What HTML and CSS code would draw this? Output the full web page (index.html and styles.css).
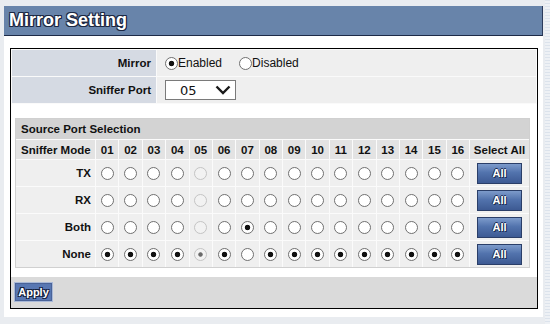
FILE: index.html
```html
<!DOCTYPE html>
<html>
<head>
<meta charset="utf-8">
<link rel="stylesheet" href="styles.css">
</head>
<body>
<div class="page">
  <div class="title">Mirror Setting</div>
  <div class="content">
    <div class="box">
      <div class="settings">
        <div class="lbl">Mirror</div>
        <div class="val">
          <label class="opt"><input type="radio" name="mirror" checked>Enabled</label>
          <label class="opt"><input type="radio" name="mirror">Disabled</label>
        </div>
        <div class="lbl">Sniffer Port</div>
        <div class="val">
          <span class="sel-wrap">
            <select class="sel"><option>05</option></select>
            <svg class="chev" width="16" height="10" viewBox="0 0 16 10"><path d="M1.5 1.5 L8 8 L14.5 1.5" fill="none" stroke="#1a1a1a" stroke-width="2.4"/></svg>
          </span>
        </div>
      </div>

      <div class="src">
        <div class="src-head">Source Port Selection</div>
        <div class="ch mode">Sniffer Mode</div>
        <div class="ch">01</div><div class="ch">02</div><div class="ch">03</div><div class="ch">04</div>
        <div class="ch">05</div><div class="ch">06</div><div class="ch">07</div><div class="ch">08</div>
        <div class="ch">09</div><div class="ch">10</div><div class="ch">11</div><div class="ch">12</div>
        <div class="ch">13</div><div class="ch">14</div><div class="ch">15</div><div class="ch">16</div>
        <div class="ch">Select All</div>

        <div class="rl">TX</div>
        <div class="rc"><input type="radio" name="p1"></div><div class="rc"><input type="radio" name="p2"></div>
        <div class="rc"><input type="radio" name="p3"></div><div class="rc"><input type="radio" name="p4"></div>
        <div class="rc"><input type="radio" name="p5" disabled></div><div class="rc"><input type="radio" name="p6"></div>
        <div class="rc"><input type="radio" name="p7"></div><div class="rc"><input type="radio" name="p8"></div>
        <div class="rc"><input type="radio" name="p9"></div><div class="rc"><input type="radio" name="p10"></div>
        <div class="rc"><input type="radio" name="p11"></div><div class="rc"><input type="radio" name="p12"></div>
        <div class="rc"><input type="radio" name="p13"></div><div class="rc"><input type="radio" name="p14"></div>
        <div class="rc"><input type="radio" name="p15"></div><div class="rc"><input type="radio" name="p16"></div>
        <div class="rc"><button class="all">All</button></div>

        <div class="rl">RX</div>
        <div class="rc"><input type="radio" name="p1"></div><div class="rc"><input type="radio" name="p2"></div>
        <div class="rc"><input type="radio" name="p3"></div><div class="rc"><input type="radio" name="p4"></div>
        <div class="rc"><input type="radio" name="p5" disabled></div><div class="rc"><input type="radio" name="p6"></div>
        <div class="rc"><input type="radio" name="p7"></div><div class="rc"><input type="radio" name="p8"></div>
        <div class="rc"><input type="radio" name="p9"></div><div class="rc"><input type="radio" name="p10"></div>
        <div class="rc"><input type="radio" name="p11"></div><div class="rc"><input type="radio" name="p12"></div>
        <div class="rc"><input type="radio" name="p13"></div><div class="rc"><input type="radio" name="p14"></div>
        <div class="rc"><input type="radio" name="p15"></div><div class="rc"><input type="radio" name="p16"></div>
        <div class="rc"><button class="all">All</button></div>

        <div class="rl">Both</div>
        <div class="rc"><input type="radio" name="p1"></div><div class="rc"><input type="radio" name="p2"></div>
        <div class="rc"><input type="radio" name="p3"></div><div class="rc"><input type="radio" name="p4"></div>
        <div class="rc"><input type="radio" name="p5" disabled></div><div class="rc"><input type="radio" name="p6"></div>
        <div class="rc"><input type="radio" name="p7" checked></div><div class="rc"><input type="radio" name="p8"></div>
        <div class="rc"><input type="radio" name="p9"></div><div class="rc"><input type="radio" name="p10"></div>
        <div class="rc"><input type="radio" name="p11"></div><div class="rc"><input type="radio" name="p12"></div>
        <div class="rc"><input type="radio" name="p13"></div><div class="rc"><input type="radio" name="p14"></div>
        <div class="rc"><input type="radio" name="p15"></div><div class="rc"><input type="radio" name="p16"></div>
        <div class="rc"><button class="all">All</button></div>

        <div class="rl">None</div>
        <div class="rc"><input type="radio" name="p1" checked></div><div class="rc"><input type="radio" name="p2" checked></div>
        <div class="rc"><input type="radio" name="p3" checked></div><div class="rc"><input type="radio" name="p4" checked></div>
        <div class="rc"><input type="radio" name="p5" checked disabled></div><div class="rc"><input type="radio" name="p6" checked></div>
        <div class="rc"><input type="radio" name="p7"></div><div class="rc"><input type="radio" name="p8" checked></div>
        <div class="rc"><input type="radio" name="p9" checked></div><div class="rc"><input type="radio" name="p10" checked></div>
        <div class="rc"><input type="radio" name="p11" checked></div><div class="rc"><input type="radio" name="p12" checked></div>
        <div class="rc"><input type="radio" name="p13" checked></div><div class="rc"><input type="radio" name="p14" checked></div>
        <div class="rc"><input type="radio" name="p15" checked></div><div class="rc"><input type="radio" name="p16" checked></div>
        <div class="rc"><button class="all">All</button></div>
      </div>

      <div class="apply-bar"><button class="apply">Apply</button></div>
    </div>
  </div>
</div>
<div class="rail"></div>
</body>
</html>
```
FILE: styles.css
```css
html, body {
  margin: 0;
  padding: 0;
}
body {
  background: #e9ecf0;
  font-family: "Liberation Sans", Arial, sans-serif;
  color: #111;
  display: flex;
  align-items: flex-start;
  height: 324px;
  overflow: hidden;
}
.page {
  margin-left: 4px;
  margin-top: 6px;
  width: 539px;
}
.title {
  height: 29px;
  background: #6884aa;
  border-bottom: 1px solid #1d2a47;
  border-right: 1px solid #2b3b5c;
  color: #fff;
  font-weight: bold;
  font-size: 18px;
  line-height: 29px;
  padding-left: 5px;
  text-shadow: 1px 1px 0 #1b2742, -1px -1px 0 #1b2742, 1px -1px 0 #1b2742, -1px 1px 0 #1b2742, 0 1px 0 #1b2742, 1px 0 0 #1b2742;
}
.content {
  background: #fff;
  padding: 12px 5px 8px 6px;
}
.box {
  border: 1px solid #000;
  background: #fff;
}
.settings {
  display: grid;
  grid-template-columns: 144px 1fr;
  grid-auto-rows: 26px;
  gap: 1px;
  padding: 1px;
  background: #fafafa;
}
.lbl {
  background: #d5dae3;
  font-weight: bold;
  font-size: 11.5px;
  padding-right: 5px;
  display: flex;
  align-items: center;
  justify-content: flex-end;
}
.val {
  background: #efefef;
  display: flex;
  align-items: center;
  padding-left: 8px;
  font-size: 12px;
}
.opt {
  display: flex;
  align-items: center;
  margin-right: 17px;
}
.opt input {
  margin-right: 2px;
}
input[type=radio] {
  -webkit-appearance: none;
  appearance: none;
  width: 13px;
  height: 13px;
  margin: 0;
  border: 1px solid #707070;
  border-radius: 50%;
  background: #fff;
  box-sizing: border-box;
}
input[type=radio]:checked {
  background: radial-gradient(circle, #111 0, #111 2.4px, #fff 3.1px);
}
input[type=radio]:disabled {
  border-color: #c4c4c4;
  background: #f2f2f2;
}
input[type=radio]:disabled:checked {
  background: radial-gradient(circle, #6a6a6a 0, #6a6a6a 1.8px, #f2f2f2 2.6px);
}
.sel-wrap {
  position: relative;
  display: inline-block;
  height: 20px;
}
.sel {
  -webkit-appearance: none;
  appearance: none;
  width: 71px;
  height: 20px;
  border: 1px solid #7a7a7a;
  border-radius: 0;
  background: #fff;
  font-family: "DejaVu Sans", sans-serif;
  font-size: 13px;
  padding: 0 0 0 14px;
  color: #111;
  margin: 0;
}
.chev {
  position: absolute;
  right: 5px;
  top: 5px;
  pointer-events: none;
}
.src {
  margin: 14px 7px 9px 4px;
  display: grid;
  grid-template-columns: 79px repeat(16, 1fr) 59px;
  grid-template-rows: 20px 19px repeat(4, 26px);
  gap: 1px;
  border: 1px solid #d0d0d0;
  background: #fbfbfb;
  font-size: 11.5px;
  font-weight: bold;
}
.src-head {
  grid-column: 1 / -1;
  background: #d3d3d3;
  display: flex;
  align-items: center;
  padding-left: 5px;
}
.ch {
  background: #e3e3e3;
  display: flex;
  align-items: center;
  justify-content: center;
}
.ch.mode {
  justify-content: flex-start;
  padding-left: 5px;
}
.rl {
  background: #efefef;
  display: flex;
  align-items: center;
  justify-content: flex-end;
  padding-right: 4px;
}
.rc {
  background: #efefef;
  display: flex;
  align-items: center;
  justify-content: center;
}
.all {
  width: 45px;
  height: 21px;
  border: 1px solid #2a3e68;
  background: linear-gradient(#7d9bcb, #5273ad 45%, #3d5a93);
  color: #fff;
  font-family: "Liberation Sans", Arial, sans-serif;
  font-weight: bold;
  font-size: 11px;
  padding: 0;
  text-shadow: 1px 1px 0 #1c2c50, -1px 0 0 #1c2c50, 0 -1px 0 #1c2c50;
}
.apply-bar {
  background: #dadada;
  height: 31px;
  box-sizing: border-box;
  padding: 5px 0 0 3px;
}
.apply {
  width: 39px;
  height: 20px;
  background: #5877b3;
  border: 1px solid #a9b9d8;
  outline: 1px solid #4a6398;
  outline-offset: -2px;
  color: #fff;
  font-family: "Liberation Sans", Arial, sans-serif;
  font-weight: bold;
  font-size: 11px;
  padding: 0;
  text-shadow: 1px 1px 0 #14203c, -1px -1px 0 #14203c, 1px -1px 0 #14203c, -1px 1px 0 #14203c;
}
.rail {
  margin-left: 2px;
  width: 5px;
  height: 324px;
  background: repeating-linear-gradient(#dce3ec 0, #dce3ec 1px, #eef1f5 1px, #eef1f5 3px);
}
```
